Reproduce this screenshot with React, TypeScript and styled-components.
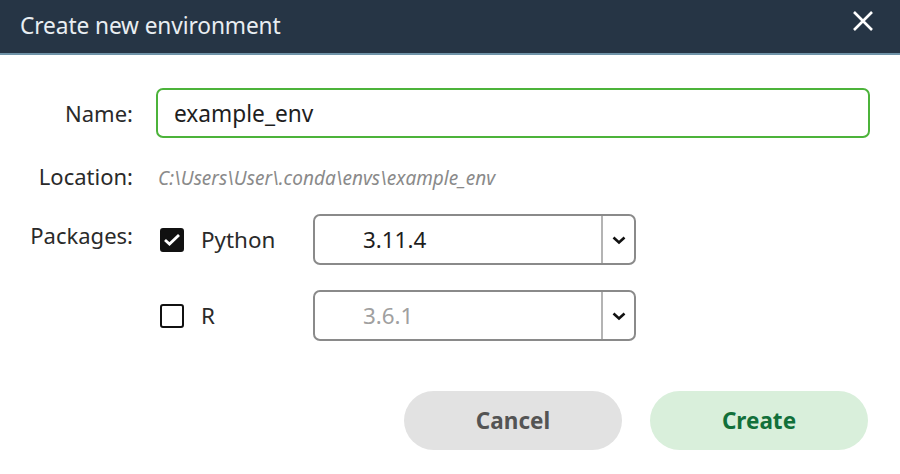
import styled, { createGlobalStyle } from "styled-components";

const GlobalStyle = createGlobalStyle`
    html, body {
        margin: 0;
        padding: 0;
        background: #ffffff;
        font-family: "Noto Sans", "Open Sans", sans-serif;
    }
`;

const Dialog = styled.div`
    width: 900px;
    height: 474px;
    background: #ffffff;
    display: flex;
    flex-direction: column;
`;

const Header = styled.div`
    height: 53px;
    background: #263545;
    border-bottom: 2px solid #6f93a8;
    display: flex;
    align-items: center;
    justify-content: space-between;
    padding: 0 24px 0 20px;
`;

const Title = styled.h1`
    margin: 0 0 2px;
    font-size: 22.7px;
    font-weight: 400;
    color: #e9eef2;
    letter-spacing: -0.1px;
`;

const CloseButton = styled.button`
    border: 0;
    background: none;
    padding: 0;
    width: 26px;
    height: 26px;
    margin-top: -12px;
    display: flex;
    align-items: center;
    justify-content: center;
    cursor: pointer;
`;

const Form = styled.div`
    display: grid;
    grid-template-columns: 133px 714px;
    column-gap: 23px;
    padding-top: 33px;
`;

const Label = styled.div<{ $top?: number }>`
    font-size: 22px;
    color: #2a2a2a;
    text-align: right;
    align-self: ${p => (p.$top !== undefined ? "start" : "center")};
    padding-top: ${p => p.$top ?? 0}px;
`;

const NameInput = styled.input`
    box-sizing: border-box;
    height: 50px;
    width: 714px;
    border: 2px solid #4cb33a;
    border-radius: 7px;
    padding: 0 16px;
    font-family: inherit;
    font-size: 22.7px;
    color: #1e1e1e;
    outline: none;
`;

const LocationRow = styled.div`
    height: 40px;
    margin: 20px 0 16px;
    display: flex;
    align-items: center;
`;

const Path = styled.span`
    font-size: 19px;
    font-style: italic;
    color: #8a8a8a;
    padding-left: 2px;
`;

const Packages = styled.div`
    display: flex;
    flex-direction: column;
    gap: 25px;
`;

const PackageRow = styled.div`
    display: flex;
    align-items: center;
`;

const CheckLabel = styled.label`
    width: 157px;
    display: flex;
    align-items: center;
    gap: 17px;
    padding-left: 4px;
    box-sizing: border-box;
    font-size: 22.4px;
    color: #2a2a2a;
`;

const Box = styled.span<{ $checked: boolean }>`
    box-sizing: border-box;
    width: 24px;
    height: 24px;
    border-radius: 3px;
    border: 2.5px solid #111;
    background: ${p => (p.$checked ? "#111" : "#fff")};
    display: flex;
    align-items: center;
    justify-content: center;
`;

const Select = styled.div`
    box-sizing: border-box;
    width: 323px;
    height: 51px;
    border: 2px solid #8a8a8a;
    border-radius: 7px;
    display: flex;
`;

const SelectValue = styled.div<{ $muted: boolean }>`
    flex: 1;
    display: flex;
    align-items: center;
    padding-left: 48px;
    font-size: 22.4px;
    color: ${p => (p.$muted ? "#a0a0a0" : "#1e1e1e")};
`;

const SelectArrow = styled.div`
    width: 31px;
    border-left: 2px solid #b4b4b4;
    display: flex;
    align-items: center;
    justify-content: center;
`;

const Actions = styled.div`
    display: flex;
    justify-content: flex-end;
    gap: 28px;
    padding: 0 32px 0 0;
    margin-top: 50px;
`;

const Button = styled.button<{ $primary?: boolean }>`
    width: 218px;
    height: 59px;
    border: 0;
    border-radius: 30px;
    font-family: inherit;
    font-size: 22.5px;
    font-weight: 700;
    background: ${p => (p.$primary ? "#d9efdb" : "#e2e2e2")};
    color: ${p => (p.$primary ? "#12703a" : "#545454")};
    cursor: pointer;
`;

const Chevron = () => (
    <svg width="16" height="10" viewBox="0 0 16 10">
        <path d="M2.5 2.5 L8 7.5 L13.5 2.5" fill="none" stroke="#111" strokeWidth="2.6" />
    </svg>
);

const Check = () => (
    <svg width="18" height="15" viewBox="0 0 18 15">
        <path d="M2 8 L6.5 12 L16 3" fill="none" stroke="#fff" strokeWidth="2.8" />
    </svg>
);

function PackageOption({ name, version, checked }: { name: string; version: string; checked: boolean }) {
    return (
        <PackageRow>
            <CheckLabel>
                <Box $checked={checked}>{checked && <Check />}</Box>
                {name}
            </CheckLabel>
            <Select>
                <SelectValue $muted={!checked}>{version}</SelectValue>
                <SelectArrow><Chevron /></SelectArrow>
            </Select>
        </PackageRow>
    );
}

export default function App() {
    return (
        <>
            <GlobalStyle />
            <Dialog>
                <Header>
                    <Title>Create new environment</Title>
                    <CloseButton aria-label="Close">
                        <svg width="22" height="22" viewBox="0 0 22 22">
                            <path d="M2 2 L20 20 M20 2 L2 20" stroke="#fff" strokeWidth="2.6" />
                        </svg>
                    </CloseButton>
                </Header>
                <Form>
                    <Label>Name:</Label>
                    <NameInput defaultValue="example_env" />
                    <Label>Location:</Label>
                    <LocationRow>
                        <Path>C:\Users\User\.conda\envs\example_env</Path>
                    </LocationRow>
                    <Label $top={6}>Packages:</Label>
                    <Packages>
                        <PackageOption name="Python" version="3.11.4" checked />
                        <PackageOption name="R" version="3.6.1" checked={false} />
                    </Packages>
                </Form>
                <Actions>
                    <Button>Cancel</Button>
                    <Button $primary>Create</Button>
                </Actions>
            </Dialog>
        </>
    );
}
